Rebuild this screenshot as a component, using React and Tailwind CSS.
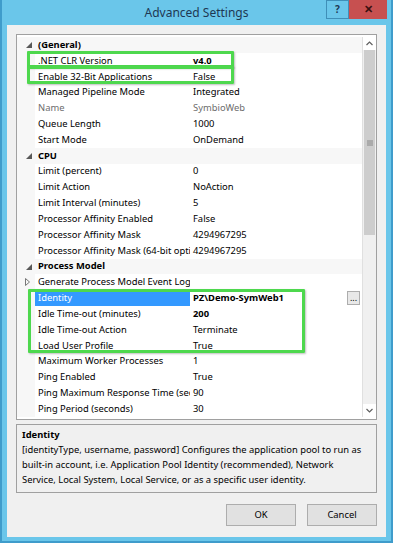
import React from "react";

const rows = [
  { t: "cat", label: "(General)" },
  { label: ".NET CLR Version", value: "v4.0", bold: true },
  { label: "Enable 32-Bit Applications", value: "False" },
  { label: "Managed Pipeline Mode", value: "Integrated" },
  { label: "Name", value: "SymbioWeb", disabled: true },
  { label: "Queue Length", value: "1000" },
  { label: "Start Mode", value: "OnDemand" },
  { t: "cat", label: "CPU" },
  { label: "Limit (percent)", value: "0" },
  { label: "Limit Action", value: "NoAction" },
  { label: "Limit Interval (minutes)", value: "5" },
  { label: "Processor Affinity Enabled", value: "False" },
  { label: "Processor Affinity Mask", value: "4294967295" },
  { label: "Processor Affinity Mask (64-bit option)", value: "4294967295" },
  { t: "cat", label: "Process Model" },
  { label: "Generate Process Model Event Log Entry", value: "", collapsed: true },
  { label: "Identity", value: "PZ\\Demo-SymWeb1", bold: true, selected: true, ellipsis: true },
  { label: "Idle Time-out (minutes)", value: "200", bold: true },
  { label: "Idle Time-out Action", value: "Terminate" },
  { label: "Load User Profile", value: "True" },
  { label: "Maximum Worker Processes", value: "1" },
  { label: "Ping Enabled", value: "True" },
  { label: "Ping Maximum Response Time (seconds)", value: "90" },
  { label: "Ping Period (seconds)", value: "30" },
];

function Row({ r }) {
  if (r.t === "cat") {
    return (
      <div className="flex h-[15.83px] items-center bg-[#f7f7f7]">
        <div className="flex w-[18px] shrink-0 justify-end pr-[3px]">
          <svg width="6" height="6" viewBox="0 0 6 6">
            <path d="M6 0 L6 6 L0 6 Z" fill="#595959" />
          </svg>
        </div>
        <div className="pl-[3px] font-bold text-black">{r.label}</div>
      </div>
    );
  }
  return (
    <div className="flex h-[15.83px] items-center">
      <div className="flex h-full w-[18px] shrink-0 items-center justify-end bg-[#f7f7f7] pr-[5px]">
        {r.collapsed && (
          <svg width="5" height="8" viewBox="0 0 5 8">
            <path d="M0.5 0.5 L4.5 4 L0.5 7.5 Z" fill="none" stroke="#777" strokeWidth="1" />
          </svg>
        )}
      </div>
      <div
        className={
          "flex h-full w-[155px] shrink-0 items-center overflow-hidden whitespace-nowrap pl-[3px] " +
          (r.selected ? "bg-[#3399ff] text-white" : r.disabled ? "text-[#6d6d6d]" : "text-black")
        }
      >
        {r.label}
      </div>
      <div
        className={
          "flex h-full flex-1 items-center whitespace-nowrap pl-[3px] " +
          (r.bold ? "font-bold " : "") +
          (r.disabled ? "text-[#6d6d6d]" : "text-black")
        }
      >
        {r.value}
      </div>
      {r.ellipsis && (
        <div className="mr-[2px] flex h-[14px] w-[13px] items-end justify-center border border-[#adadad] bg-[#e8e8e8] pb-[2px] text-[9px] leading-none text-black">
          ...
        </div>
      )}
    </div>
  );
}

export default function App() {
  return (
    <div
      className="relative flex h-[543px] w-[393px] flex-col border-x-2 border-b-2 border-[#3f9ccb] bg-[#6ac6ea] text-[9.4px]"
      style={{ fontFamily: "'Noto Sans', 'Open Sans', sans-serif" }}
    >
      {/* title bar */}
      <div className="relative flex h-[25px] shrink-0 items-center justify-center">
        <span className="mt-[1px] text-[12px] text-[#1e3853]">Advanced Settings</span>
        <div className="absolute right-[4px] top-0 flex h-[19px]">
          <div className="flex w-[23px] items-center justify-center border border-[#3f8fb8] bg-[#6ac6ea] text-[10px] font-bold text-[#1e3853]">
            ?
          </div>
          <div className="flex w-[38px] items-center justify-center bg-[#c75050] text-[11px] font-bold text-[#3a1010]">
            ✕
          </div>
        </div>
      </div>

      {/* body */}
      <div className="mx-[5px] mb-[4px] flex flex-1 flex-col bg-[#f0f0f0] px-[9px] pt-[9px]">
        {/* property grid */}
        <div className="flex h-[386px] border border-[#a0a0a0] bg-white pt-[2px]">
          <div className="flex flex-1 flex-col">
            {rows.map((r, i) => (
              <Row key={i} r={r} />
            ))}
          </div>
          {/* scrollbar */}
          <div className="mb-[2px] flex w-[14px] flex-col border-l border-[#e0e0e0] bg-[#f0f0f0]">
            <div className="flex h-[13px] items-center justify-center bg-white">
              <svg width="7" height="5" viewBox="0 0 7 5">
                <path d="M0.5 4 L3.5 1 L6.5 4" fill="none" stroke="#606060" strokeWidth="1.2" />
              </svg>
            </div>
            <div className="mx-[1px] flex h-[185px] items-center justify-center bg-[#cdcdcd]">
              <svg width="6" height="6" viewBox="0 0 6 6">
                <path d="M0 1 H6 M0 3 H6 M0 5 H6" stroke="#777" strokeWidth="0.8" />
              </svg>
            </div>
            <div className="flex-1" />
            <div className="flex h-[13px] items-center justify-center bg-white">
              <svg width="7" height="5" viewBox="0 0 7 5">
                <path d="M0.5 1 L3.5 4 L6.5 1" fill="none" stroke="#606060" strokeWidth="1.2" />
              </svg>
            </div>
          </div>
        </div>

        {/* description */}
        <div className="mt-[4px] h-[69px] border border-[#a0a0a0] bg-[#f0f0f0] px-[5px] pt-[2px] leading-[15px] text-black">
          <div className="font-bold">Identity</div>
          <div className="whitespace-nowrap">
            [identityType, username, password] Configures the application pool to run as
            <br />
            built-in account, i.e. Application Pool Identity (recommended), Network
            <br />
            Service, Local System, Local Service, or as a specific user identity.
          </div>
        </div>

        {/* buttons */}
        <div className="mt-[11px] flex justify-end gap-[11px]">
          <button className="h-[22px] w-[70px] border border-[#adadad] bg-[#e1e1e1] text-[9.4px] text-black">
            OK
          </button>
          <button className="h-[22px] w-[70px] border border-[#adadad] bg-[#e1e1e1] text-[9.4px] text-black">
            Cancel
          </button>
        </div>
      </div>

      {/* green annotation boxes */}
      <div className="pointer-events-none absolute left-[25px] top-[51px] h-[17px] w-[207px] rounded-[1px] border-[3px] border-[#4ed84e] shadow-[1px_1px_2px_rgba(0,0,0,0.25)]" />
      <div className="pointer-events-none absolute left-[25px] top-[66px] h-[18px] w-[207px] rounded-[1px] border-[3px] border-[#4ed84e] shadow-[1px_1px_2px_rgba(0,0,0,0.25)]" />
      <div className="pointer-events-none absolute left-[26px] top-[289px] h-[64px] w-[277px] rounded-[1px] border-[3px] border-[#4ed84e] shadow-[1px_1px_2px_rgba(0,0,0,0.25)]" />
    </div>
  );
}
